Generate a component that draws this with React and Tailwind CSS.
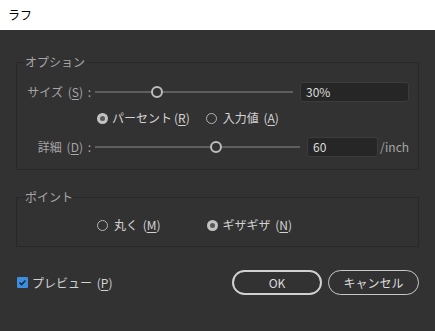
const font = { fontFamily: '"Noto Sans CJK JP", "Noto Sans", sans-serif' };

const Key = ({ k }) => (
  <span className="ml-[2px]">
    (<span className="underline underline-offset-2">{k}</span>)
  </span>
);

const Radio = ({ checked }) =>
  checked ? (
    <span className="block shrink-0 w-[11px] h-[11px] rounded-full bg-[#c2c2c2] flex items-center justify-center">
      <span className="block w-[5px] h-[5px] rounded-full bg-[#5a5a5a]" />
    </span>
  ) : (
    <span className="block shrink-0 w-[11px] h-[11px] rounded-full border border-[#b4b4b4]" />
  );

const Slider = ({ left }) => (
  <div className="flex items-center flex-1">
    <div className="h-[2px] bg-[#5e5e5e]" style={{ width: left }} />
    <div className="w-[12px] h-[12px] rounded-full border-2 border-[#bdbdbd] shrink-0" />
    <div className="h-[2px] bg-[#5e5e5e] flex-1" />
  </div>
);

const Field = ({ value, width }) => (
  <div
    className={`h-[20px] ${width} bg-[#262626] border border-[#3c3c3c] rounded-[3px] flex items-center px-[5px] text-[12px] text-[#dcdcdc]`}
  >
    {value}
  </div>
);

export default function App() {
  return (
    <div className="w-[435px] h-[331px] flex flex-col" style={font}>
      <div className="h-[30px] bg-white flex items-center pl-2 text-[12px] text-black">ラフ</div>

      <div className="flex-1 bg-[#323232] px-4 flex flex-col text-[12px] leading-[16px]">
        {/* オプション */}
        <fieldset className="mt-[24px] border border-[#282828] px-0">
          <legend className="ml-2 text-[#a6a6a6]">オプション</legend>
          <div className="flex flex-col pt-3 pb-3">
            <div className="flex items-center h-[20px] pr-[9px]">
              <div className="w-[75px] text-right text-[#a6a6a6] pr-[1px] whitespace-nowrap">
                サイズ <Key k="S" /> <span className="ml-[2px]">:</span>
              </div>
              <div className="flex ml-[3px] w-[198px]">
                <Slider left={56} />
              </div>
              <div className="ml-[7px]">
                <Field value="30%" width="w-[109px]" />
              </div>
            </div>

            <div className="flex items-center h-[16px] mt-2 pl-[80px] text-[#d2d2d2]">
              <Radio checked />
              <span className="ml-[4px]">
                パーセント<Key k="R" />
              </span>
              <span className="ml-[16px]">
                <Radio />
              </span>
              <span className="ml-[6px]">
                入力値 <Key k="A" />
              </span>
            </div>

            <div className="flex items-center h-[20px] mt-[11px]">
              <div className="w-[75px] text-right text-[#a6a6a6] pr-[1px] whitespace-nowrap">
                詳細 <Key k="D" /> <span className="ml-[2px]">:</span>
              </div>
              <div className="flex ml-[3px] w-[205px]">
                <Slider left={115} />
              </div>
              <div className="ml-[7px]">
                <Field value="60" width="w-[71px]" />
              </div>
              <span className="ml-[2px] text-[12px] text-[#a6a6a6]">/inch</span>
            </div>
          </div>
        </fieldset>

        {/* ポイント */}
        <fieldset className="mt-[19px] border border-[#282828] px-0">
          <legend className="ml-2 text-[#a6a6a6]">ポイント</legend>
          <div className="flex items-center h-[16px] mt-3 mb-[13px] pl-[80px] text-[#d2d2d2]">
            <Radio />
            <span className="ml-[6px]">
              丸く <Key k="M" />
            </span>
            <span className="ml-[46px]">
              <Radio checked />
            </span>
            <span className="ml-[5px]">
              ギザギザ <Key k="N" />
            </span>
          </div>
        </fieldset>

        {/* footer */}
        <div className="flex items-center mt-[23px]">
          <span className="w-[11px] h-[11px] ml-[1px] bg-[#3d8ee0] rounded-[1px] flex items-center justify-center">
            <svg viewBox="0 0 10 10" className="w-[9px] h-[9px]">
              <path d="M1.8 5.2 L4 7.4 L8.3 2.8" fill="none" stroke="#1c2a3a" strokeWidth="1.8" />
            </svg>
          </span>
          <span className="ml-[4px] text-[#d2d2d2]">
            プレビュー <Key k="P" />
          </span>
          <div className="ml-auto flex gap-[6px]">
            <button className="w-[90px] h-[25px] rounded-full border-2 border-[#d0d0d0] text-[#dcdcdc] text-[12px]">
              OK
            </button>
            <button className="w-[91px] h-[25px] rounded-full border border-[#c8c8c8] text-[#dcdcdc] text-[12px]">
              キャンセル
            </button>
          </div>
        </div>
      </div>
    </div>
  );
}
